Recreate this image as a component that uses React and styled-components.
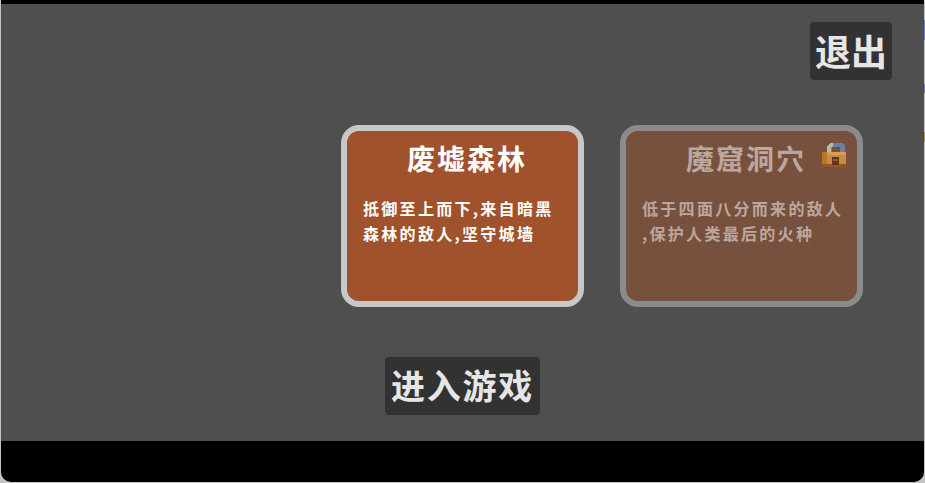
import React from 'react';
import styled, { createGlobalStyle } from 'styled-components';

const GlobalStyle = createGlobalStyle`
  html, body {
    margin: 0;
    padding: 0;
    height: 483px;
    overflow: hidden;
  }

  html {
    background-color: #c4c4c4;
  }

  body {
    background: linear-gradient(
        to bottom,
        #c4c4c4 20px,
        #6f7db0 20px 40px,
        #c4c4c4 40px 84px,
        #7c72ac 84px 93px,
        #c4c4c4 93px 132px,
        #a8925f 132px 142px,
        #c4c4c4 142px
      )
      right top / 1px 100% no-repeat;
  }
`;

const Window = styled.div`
  width: 923px;
  height: 482px;
  margin-left: 1px;
  padding: 4px 0 41px;
  box-sizing: border-box;
  background: #000;
  border-radius: 0 0 10px 10px;
  display: flex;
  font-family: 'Noto Sans CJK SC', sans-serif;
`;

const Stage = styled.div`
  flex: 1;
  background: #4f4f4f;
  display: flex;
  flex-direction: column;
  padding: 18px 0 26px;
`;

const TopBar = styled.div`
  display: flex;
  justify-content: flex-end;
  padding-right: 32px;
`;

const Button = styled.button`
  height: 58px;
  padding: 0 ${({ $inset }) => $inset}px 3px;
  border: none;
  border-radius: 4px;
  background: #323232;
  color: #e6e6e6;
  font-family: inherit;
  font-size: ${({ $size }) => $size}px;
  font-weight: 700;
  letter-spacing: ${({ $spacing }) => $spacing || 0}px;
`;

const Levels = styled.div`
  display: flex;
  justify-content: flex-end;
  gap: 36px;
  margin-top: 45px;
  padding-right: 61px;
`;

const Card = styled.div`
  position: relative;
  width: 243px;
  height: 182px;
  box-sizing: border-box;
  padding: 11px 12px 0 16px;
  border: 6px solid ${({ $locked }) => ($locked ? 'rgba(200, 200, 200, 0.5)' : '#c8c8c8')};
  border-radius: 18px;
  background: ${({ $locked }) => ($locked ? 'rgba(160, 82, 45, 0.5)' : '#a0522d')};
  background-clip: padding-box;
  color: ${({ $locked }) => ($locked ? 'rgba(255, 255, 255, 0.5)' : '#fff')};
`;

const CardTitle = styled.div`
  padding-left: 5px;
  font-size: 28px;
  font-weight: 700;
  line-height: 32px;
  text-align: center;
  letter-spacing: 2px;
`;

const CardText = styled.div`
  margin-top: 22px;
  font-size: 16px;
  font-weight: 700;
  line-height: 25px;
  letter-spacing: 2.3px;
  line-break: anywhere;
`;

const LockMark = styled.svg`
  position: absolute;
  top: 11px;
  right: 9px;
  width: 26px;
  height: 26px;
`;

const Footer = styled.div`
  display: flex;
  justify-content: center;
  margin-top: 50px;
`;

const LockIcon = () => (
  <LockMark viewBox="0 0 26 26" shapeRendering="crispEdges">
    <path d="M5 11V4l3-3h12l3 3v7h-5V5h-8v6z" fill="#6f7f9c" />
    <path d="M5 11V4l3-3h3v4H9v6z" fill="#bdb6b0" />
    <rect x="0" y="10" width="24" height="15" fill="#c98a45" />
    <rect x="0" y="10" width="5" height="15" fill="#b87628" />
    <rect x="5" y="10" width="19" height="3" fill="#dd9c4e" />
    <rect x="0" y="22" width="24" height="3" fill="#8f5a25" />
    <rect x="10" y="15" width="7" height="8" fill="#5c3520" />
    <rect x="11" y="17" width="5" height="2" fill="#8f5a25" />
  </LockMark>
);

const levels = [
  { name: '废墟森林', text: '抵御至上而下,来自暗黑森林的敌人,坚守城墙' },
  { name: '魔窟洞穴', text: '低于四面八分而来的敌人,保护人类最后的火种', locked: true },
];

const App = () => {
  return (
    <>
      <GlobalStyle />
      <Window>
        <Stage>
          <TopBar>
            <Button $size={36} $inset={5}>退出</Button>
          </TopBar>
          <Levels>
            {levels.map((level) => (
              <Card key={level.name} $locked={level.locked}>
                <CardTitle>{level.name}</CardTitle>
                <CardText>{level.text}</CardText>
                {level.locked && <LockIcon />}
              </Card>
            ))}
          </Levels>
          <Footer>
            <Button $size={34} $inset={6} $spacing={1.75}>进入游戏</Button>
          </Footer>
        </Stage>
      </Window>
    </>
  );
};

export default App;
